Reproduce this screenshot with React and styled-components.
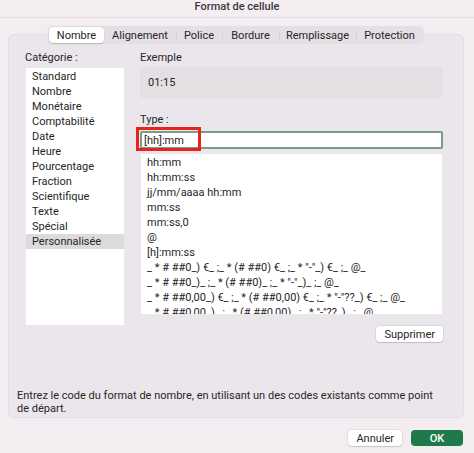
import styled, { createGlobalStyle } from "styled-components";

const GlobalStyle = createGlobalStyle`
  html, body {
    margin: 0;
    padding: 0;
    background: #f3edf2;
    font-family: "Roboto", "Liberation Sans", Arial, sans-serif;
    color: #242424;
  }
  * { box-sizing: border-box; }
`;

const tabs = [
  { label: "Nombre", width: 55 },
  { label: "Alignement", width: 72 },
  { label: "Police", width: 46 },
  { label: "Bordure", width: 57 },
  { label: "Remplissage", width: 77 },
  { label: "Protection", width: 67 },
];

const categories = [
  "Standard",
  "Nombre",
  "Monétaire",
  "Comptabilité",
  "Date",
  "Heure",
  "Pourcentage",
  "Fraction",
  "Scientifique",
  "Texte",
  "Spécial",
  "Personnalisée",
];

const formats = [
  "hh:mm",
  "hh:mm:ss",
  "jj/mm/aaaa hh:mm",
  "mm:ss",
  "mm:ss,0",
  "@",
  "[h]:mm:ss",
  '_ * # ##0_) €_ ;_ * (# ##0) €_ ;_ * "-"_) €_ ;_ @_',
  '_ * # ##0_)_ ;_ * (# ##0)_ ;_ * "-"_)_ ;_ @_',
  '_ * # ##0,00_) €_ ;_ * (# ##0,00) €_ ;_ * "-"??_) €_ ;_ @_',
  '_ * # ##0,00_)_ ;_ * (# ##0,00)_ ;_ * "-"??_)_ ;_ @_',
];

export default function App() {
  return (
    <Window>
      <GlobalStyle />
      <TitleBar>Format de cellule</TitleBar>
      <Body>
        <TabBar>
          {tabs.map((t, i) => (
            <Tab key={t.label} $width={t.width} $active={i === 0} $divider={i > 1}>
              {t.label}
            </Tab>
          ))}
        </TabBar>
        <Panel>
          <Columns>
            <LeftCol>
              <Label>Catégorie :</Label>
              <CategoryList>
                {categories.map((c) => (
                  <CategoryRow key={c} $selected={c === "Personnalisée"}>
                    {c}
                  </CategoryRow>
                ))}
              </CategoryList>
            </LeftCol>
            <RightCol>
              <Label>Exemple</Label>
              <SampleBox>01:15</SampleBox>
              <TypeLabel>Type :</TypeLabel>
              <InputWrap>
                <TypeInput defaultValue="[hh]:mm" />
                <Highlight />
              </InputWrap>
              <FormatList>
                {formats.map((f) => (
                  <FormatRow key={f}>{f}</FormatRow>
                ))}
              </FormatList>
              <ButtonRow>
                <Button>Supprimer</Button>
              </ButtonRow>
            </RightCol>
          </Columns>
          <Description>
            Entrez le code du format de nombre, en utilisant un des codes existants comme point
            <br />
            de départ.
          </Description>
        </Panel>
        <Footer>
          <Button $wide>Annuler</Button>
          <PrimaryButton>OK</PrimaryButton>
        </Footer>
      </Body>
    </Window>
  );
}

const Window = styled.div`
  width: 474px;
  height: 453px;
  display: flex;
  flex-direction: column;
  background: #f3edf2;
  overflow: hidden;
`;

const TitleBar = styled.div`
  height: 18px;
  line-height: 14px;
  text-align: center;
  font-size: 11px;
  font-weight: 500;
  color: #3a3a3a;
  border-bottom: 1px solid #e2dce1;
  background: #f4eef3;
`;

const Body = styled.div`
  display: flex;
  flex-direction: column;
  padding: 8px 10px 0 8px;
`;

const TabBar = styled.div`
  position: relative;
  z-index: 1;
  align-self: flex-start;
  margin-left: 40px;
  display: flex;
  height: 18px;
  padding: 1px;
  border-radius: 5px;
  background: #e4dfe4;
  margin-bottom: -10px;
`;

const Tab = styled.div`
  position: relative;
  width: ${(p) => p.$width}px;
  display: flex;
  align-items: center;
  justify-content: center;
  font-size: 11px;
  color: #262626;
  border-radius: 4px;
  background: ${(p) => (p.$active ? "#ffffff" : "transparent")};
  box-shadow: ${(p) => (p.$active ? "0 0.5px 1.5px rgba(0,0,0,0.2)" : "none")};

  &::before {
    content: "";
    display: ${(p) => (p.$divider ? "block" : "none")};
    position: absolute;
    left: 0;
    top: 4px;
    bottom: 4px;
    width: 1px;
    background: #d6d1d6;
  }
`;

const Panel = styled.div`
  width: 456px;
  height: 384px;
  background: #ebe6eb;
  border: 1px solid #e3dee3;
  border-radius: 6px;
  padding: 16px 8px 0 8px;
  display: flex;
  flex-direction: column;
`;

const Columns = styled.div`
  display: flex;
  gap: 15px;
  padding-left: 8px;
`;

const LeftCol = styled.div`
  width: 100px;
  display: flex;
  flex-direction: column;
`;

const RightCol = styled.div`
  width: 303px;
  display: flex;
  flex-direction: column;
`;

const Label = styled.div`
  font-size: 11px;
  line-height: 13px;
  height: 13px;
  color: #262626;
`;

const CategoryList = styled.div`
  margin: 4px 0 0 1px;
  width: 98px;
  height: 257px;
  background: #ffffff;
  padding-top: 1px;
`;

const CategoryRow = styled.div`
  height: 15px;
  line-height: 15px;
  font-size: 11px;
  padding-left: 6px;
  color: #262626;
  background: ${(p) => (p.$selected ? "#dcdadc" : "transparent")};
`;

const SampleBox = styled.div`
  margin-top: 3px;
  height: 31px;
  border-radius: 4px;
  background: #e3dfe3;
  padding-left: 8px;
  display: flex;
  align-items: center;
  font-size: 11px;
  color: #262626;
`;

const TypeLabel = styled(Label)`
  margin-top: 15px;
`;

const InputWrap = styled.div`
  position: relative;
  margin-top: 5px;
`;

const TypeInput = styled.input`
  display: block;
  width: 303px;
  height: 18px;
  border: 2px solid #7c9d83;
  border-radius: 2px;
  background: #ffffff;
  padding: 0 2px;
  font-family: inherit;
  font-size: 11px;
  color: #1f1f1f;
  outline: none;
`;

const Highlight = styled.div`
  position: absolute;
  left: -4px;
  top: -4px;
  width: 65px;
  height: 24px;
  border: 3px solid #e3251b;
  pointer-events: none;
`;

const FormatList = styled.div`
  margin: 5px 1px 0 1px;
  height: 160px;
  background: #ffffff;
  padding: 1px 0 0 6px;
  overflow: hidden;
`;

const FormatRow = styled.div`
  height: 15px;
  line-height: 15px;
  font-size: 11px;
  color: #262626;
  white-space: pre;
`;

const ButtonRow = styled.div`
  display: flex;
  justify-content: flex-end;
  margin-top: 12px;
`;

const Button = styled.button`
  height: 16px;
  min-width: ${(p) => (p.$wide ? "53px" : "65px")};
  padding: 0 8px;
  border: none;
  border-radius: 4px;
  background: #ffffff;
  box-shadow: 0 0 0 0.5px rgba(0,0,0,0.12), 0 1px 1px rgba(0,0,0,0.12);
  font-family: inherit;
  font-size: 11px;
  color: #262626;
`;

const Description = styled.div`
  margin-top: auto;
  margin-bottom: 2px;
  font-size: 11px;
  line-height: 13px;
  color: #262626;
  white-space: nowrap;
`;

const Footer = styled.div`
  display: flex;
  justify-content: flex-end;
  gap: 9px;
  margin-top: 12px;
  margin-right: 1px;
`;

const PrimaryButton = styled.button`
  height: 16px;
  width: 52px;
  border: none;
  border-radius: 4px;
  background: #1e7a4b;
  font-family: inherit;
  font-size: 11px;
  font-weight: 500;
  color: #ffffff;
`;
